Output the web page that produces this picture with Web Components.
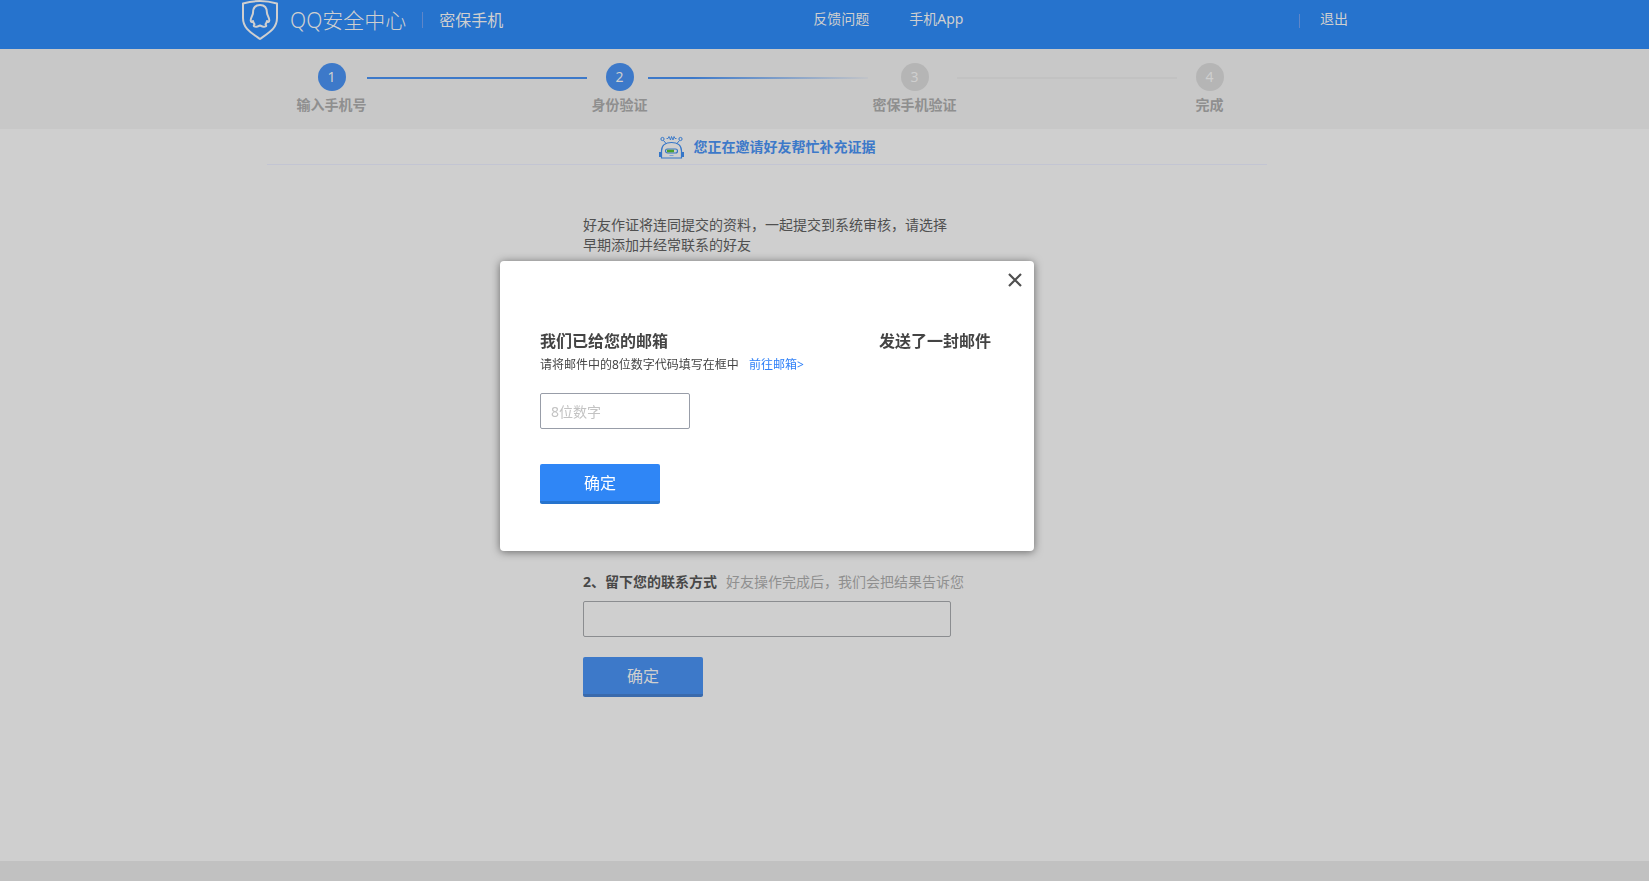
<!DOCTYPE html>
<html lang="zh-CN">
<head>
<meta charset="utf-8">
<meta name="viewport" content="width=device-width, initial-scale=1">
<title>QQ安全中心 - 密保手机</title>
<style>
  html, body { margin: 0; min-height: 100%; }
  body {
    background: #cfcfcf;
    color: #505050;
    font: 14px/20px "Noto Sans", "Noto Sans CJK SC", sans-serif;
    --blue: #2f86f6;
    --blue-edge: #2673cd;
    --blue-dim: #3d79c9;
    --blue-dim-edge: #3a6aac;
  }
</style>
</head>
<body>
<security-page></security-page>
<script>
class BaseElement extends HTMLElement {
  constructor() {
    super();
    this.attachShadow({ mode: 'open' }).innerHTML =
      '<style>*{box-sizing:border-box}</style>' + this.render();
  }
  render() { return ''; }
}

customElements.define('site-header', class extends BaseElement {
  render() {
    return `
    <style>
      :host { display: block; background: #2673cd; color: #cfcfcf; padding-right: 59px; }
      header { display: flex; align-items: flex-start; max-width: 1106px; height: 49px; margin: 0 auto; }
      a { color: inherit; text-decoration: none; white-space: nowrap; }
      .logo { display: flex; align-items: flex-start; gap: 12px; }
      .name { font-size: 21px; line-height: 40px; font-weight: 300; }
      svg { display: block; }
      .bar { width: 1px; height: 16px; margin: 12px 16px 0; background: #5f86c8; }
      .product { font-size: 16px; line-height: 40px; }
      nav { display: flex; gap: 40px; margin-left: 310px; line-height: 38px; }
      .account { display: flex; margin-left: auto; line-height: 38px; }
      .account .bar { margin: 14px 20px 0 0; height: 14px; }
    </style>
    <header>
      <a class="logo" href="#">
        <svg width="36" height="40" viewBox="0 0 36 40" fill="none" stroke="#cfcfcf" stroke-width="2" stroke-linejoin="round" aria-hidden="true">
          <path d="M1 3.500Q10 1 18 1T35 3.500V18C35 28 28 32 18 39C8 32 1 28 1 18Z"/>
          <path d="M18 5C13 5 11 8.500 11 13C11 15 8.500 18 8.700 20.500C8.800 22.500 10 22 11 21C11.200 22.500 12 23.500 12.500 24.300C10.500 26.500 13 27 15.500 26.500L18 25.500L20.500 26.500C23 27 25.500 26.500 23.500 24.300C24 23.500 24.800 22.500 25 21C26 22 27.200 22.500 27.300 20.500C27.500 18 25 15 25 13C25 8.500 23 5 18 5Z"/>
        </svg>
        <span class="name">QQ安全中心</span>
      </a>
      <span class="bar"></span>
      <a class="product" href="#">密保手机</a>
      <nav><a href="#">反馈问题</a><a href="#">手机App</a></nav>
      <div class="account"><span class="bar"></span><a href="#">退出</a></div>
    </header>`;
  }
});

customElements.define('step-item', class extends BaseElement {
  render() {
    return `
    <style>
      :host { display: flex; flex-direction: column; align-items: center; min-width: 56px; gap: 4px; }
      .dot { width: 28px; height: 28px; border-radius: 50%; background: #b5b5b5; color: #cfcfcf; line-height: 28px; text-align: center; }
      :host([active]) .dot { background: var(--blue-dim); }
      .label { color: #8f8f8f; font-weight: bold; white-space: nowrap; }
    </style>
    <span class="dot"><slot name="number"></slot></span>
    <span class="label"><slot></slot></span>`;
  }
});

customElements.define('step-bar', class extends BaseElement {
  render() {
    return `
    <style>
      :host { display: block; background: #c8c8c8; padding-right: 115px; }
      .steps { display: flex; max-width: 941px; height: 80px; margin: 0 auto; padding-top: 14px; }
      .line { flex: 1; height: 2px; margin: 14px 5px 0 0; background: #c2c2c2; }
      .done { background: var(--blue-dim); }
      .fade { background: linear-gradient(90deg, #3d79c9, #3d79c9 20%, #c2c4c8); }
    </style>
    <div class="steps">
      <step-item active><span slot="number">1</span>输入手机号</step-item><i class="line done"></i>
      <step-item active><span slot="number">2</span>身份验证</step-item><i class="line fade"></i>
      <step-item><span slot="number">3</span>密保手机验证</step-item><i class="line"></i>
      <step-item><span slot="number">4</span>完成</step-item>
    </div>`;
  }
});

customElements.define('page-notice', class extends BaseElement {
  render() {
    return `
    <style>
      :host { display: flex; justify-content: center; align-items: center; gap: 10px; max-width: 1000px; height: 36px;
              margin: 0 auto; border-bottom: 1px solid #c3c5d3; color: var(--blue-dim); font-weight: bold; }
    </style>
    <svg width="25" height="24" viewBox="0 0 25 24" fill="none" stroke="#3576c8" aria-hidden="true">
      <circle cx="3.500" cy="4" r="1.600"/><circle cx="21.500" cy="4" r="1.600"/>
      <path d="M4.500 5.500L7.500 9M20.500 5.500L17.500 9"/>
      <path d="M7.500 3.500H9L10 1.500L11.500 5L12.500 1.500L14 5L15 1.500L16 3.500H17.500" stroke-width=".9"/>
      <path d="M2.500 23V16C2.500 10 7 7.500 12.500 7.500S22.500 10 22.500 16V23Z" stroke-width="1.200"/>
      <path d="M1 17V22M24 17V22" stroke-width="2"/>
      <rect x="6.500" y="14" width="12" height="4" rx="2" stroke-width="1.200"/>
      <path d="M8 16H15" stroke="#4aa02c" stroke-width="2.600"/>
      <path d="M10.500 20.500H14.500" stroke="#7fa2d0"/>
    </svg>
    <span><slot></slot></span>`;
  }
});

customElements.define('action-button', class extends BaseElement {
  render() {
    return `
    <style>
      :host { display: block; }
      button { display: block; width: 120px; height: 40px; padding: 0; border: 0; border-bottom: 3px solid var(--blue-dim-edge);
               border-radius: 2px; background: var(--blue-dim); color: #cfcfcf; font: inherit; font-size: 16px; cursor: pointer; }
      :host([primary]) button { background: var(--blue); border-color: var(--blue-edge); color: #fff; }
    </style>
    <button type="button"><slot></slot></button>`;
  }
});

customElements.define('friend-form', class extends BaseElement {
  render() {
    return `
    <style>
      :host { display: block; max-width: 368px; margin: 50px auto 0; }
      p { margin: 0 0 317px; }
      label { display: flex; gap: 9px; white-space: nowrap; }
      b { color: #484848; }
      .hint { color: #8f8f8f; }
      input { display: block; width: 100%; height: 36px; margin: 9px 0 20px; padding: 0 10px; border: 1px solid #8b8d90;
              border-radius: 2px; background: transparent; font: inherit; }
    </style>
    <p>好友作证将连同提交的资料，一起提交到系统审核，请选择早期添加并经常联系的好友</p>
    <label for="contact"><b>2、留下您的联系方式</b><span class="hint">好友操作完成后，我们会把结果告诉您</span></label>
    <input id="contact" type="text">
    <action-button>确定</action-button>`;
  }
});

customElements.define('mail-dialog', class extends BaseElement {
  render() {
    return `
    <style>
      :host { position: fixed; inset: 0; display: flex; align-items: center; justify-content: center; padding: 0 115px 69px 0; }
      section { position: relative; width: 534px; padding: 68px 40px 47px; border-radius: 4px; background: #fff;
                box-shadow: 0 1px 8px rgba(0,0,0,.5); color: #444; }
      h2 { display: flex; justify-content: space-between; margin: 0; padding-right: 3px; font-size: 16px; line-height: 24px; }
      .tip { display: flex; gap: 10px; margin-top: 2px; font-size: 12px; line-height: 20px; }
      a { color: #2f80f8; text-decoration: none; }
      input { display: block; width: 150px; height: 36px; margin: 18px 0 35px; padding: 0 10px; border: 1px solid #989da8;
              border-radius: 2px; background: #fff; font: inherit; }
      input::placeholder { color: #c3c3c3; opacity: 1; }
      .close { position: absolute; top: 8px; right: 8px; width: 22px; height: 22px; padding: 4px; border: 0; background: none; cursor: pointer; }
      .close svg { display: block; }
    </style>
    <section role="dialog" aria-labelledby="title">
      <button class="close" type="button" aria-label="关闭">
        <svg width="14" height="14" viewBox="0 0 14 14" stroke="#505050" stroke-width="2.200"><path d="M1 1L13 13M13 1L1 13"/></svg>
      </button>
      <h2 id="title"><span>我们已给您的邮箱</span><span>发送了一封邮件</span></h2>
      <div class="tip"><label for="code">请将邮件中的8位数字代码填写在框中</label><a href="#">前往邮箱&gt;</a></div>
      <input id="code" type="text" maxlength="8" placeholder="8位数字">
      <action-button primary>确定</action-button>
    </section>`;
  }
});

customElements.define('security-page', class extends BaseElement {
  render() {
    return `
    <style>
      :host { display: flex; flex-direction: column; min-height: 100vh; }
      main { flex: 1; padding-right: 115px; }
      footer { height: 20px; background: #c1c1c1; }
    </style>
    <site-header></site-header>
    <step-bar></step-bar>
    <main>
      <page-notice>您正在邀请好友帮忙补充证据</page-notice>
      <friend-form></friend-form>
    </main>
    <footer></footer>
    <mail-dialog></mail-dialog>`;
  }
});
</script>
</body>
</html>
